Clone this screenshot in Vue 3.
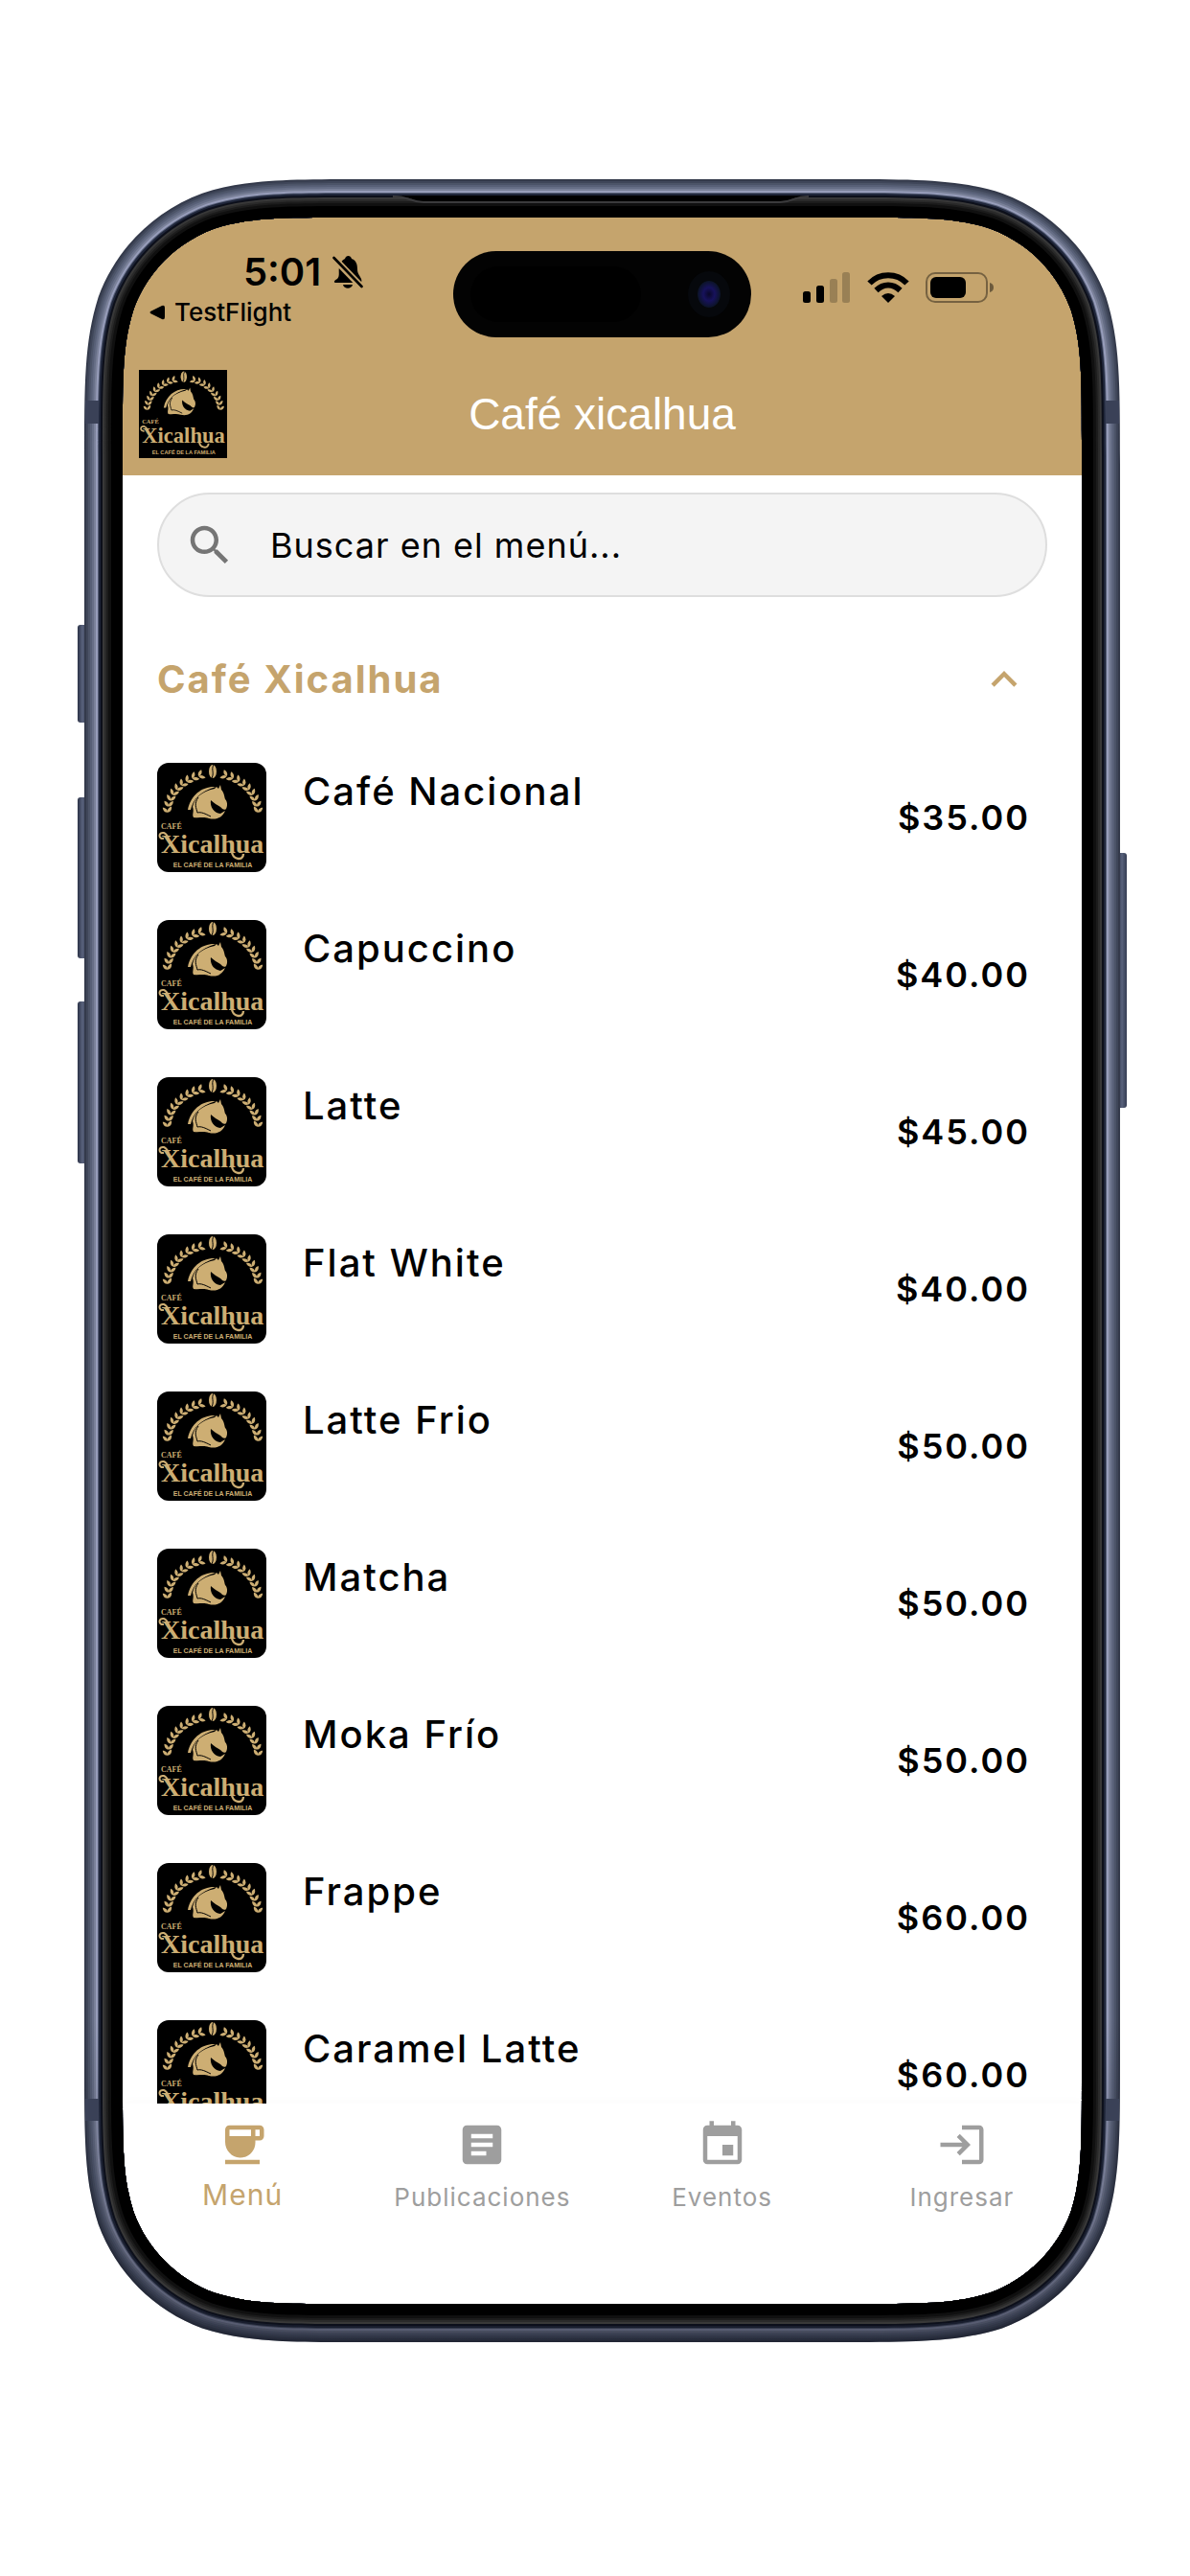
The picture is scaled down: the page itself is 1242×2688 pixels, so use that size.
<template>
  <div class="page">
    <svg class="symbols" aria-hidden="true">
      <symbol id="logo" viewBox="0 0 114 114">
        <rect width="114" height="114" fill="#000" />
        <g fill="#cdae73">
          <path
            v-for="(leaf, i) in leaves"
            :key="i"
            d="M0 0C1 -2.8 4 -3.6 7 -2.4C5.400 .6 2.600 1.300 0 0Z"
            :transform="leaf"
          />
          <ellipse cx="58" cy="9" rx="4" ry="7" />
          <path d="M59 2C56 7 60 10 57 16" fill="none" stroke="#000" stroke-width="1" />
          <path d="M61 25C48 24 35 33 32 49L35 49C38 37 45 30 61 25Z" />
          <path
            d="M66 23L67 28C70 31 70 35 71 38C73 40 74 44 72 48C70 50 68 48 66 46C63 44 59 42 56 39C55 46 59 52 66 53L71 50C68 57 62 60 54 58C48 56 44 58 38 57C36 54 39 51 37 46C39 37 46 30 60 27L62 25L64 27Z"
          />
          <path d="M43 36C38 43 41 47 42 52C46 51 50 53 56 56" fill="none" stroke="#000" stroke-width="1" />
          <g font-family="'Liberation Serif', serif" font-weight="700">
            <text x="4" y="69" font-size="8">CAFÉ</text>
            <text x="4" y="94" font-size="28">Xicalhua</text>
          </g>
          <text
            x="58"
            y="109"
            font-family="'Liberation Sans', sans-serif"
            font-size="7"
            font-weight="700"
            text-anchor="middle"
          >EL CAFÉ DE LA FAMILIA</text>
          <path d="M7 79C1 80 1 72 7 73C10 74 11 77 12 79" fill="none" stroke="#cdae73" stroke-width="2" />
          <path d="M78 92C78 101 90 103 90 95" fill="none" stroke="#cdae73" stroke-width="2.4" />
        </g>
      </symbol>
    </svg>

    <div class="phone">
      <div class="screen">
        <header class="header">
          <div class="status">
            <div class="status-left">
              <div class="clock">
                <span>5:01</span>
                <svg viewBox="0 0 32 36" width="32" height="36" aria-hidden="true">
                  <path d="M5 25C8 22 6 17 7 13C8 7 11 5 13 4C14 0 19 0 20 4C25 6 26 10 26 15C26 20 29 22 30 25C31 28 30 29 28 29H4C1 29 1 27 5 25Z" />
                  <path d="M11 31H21C20 36 12 36 11 31Z" />
                  <path d="M1 3L31 34" stroke="#c5a46d" stroke-width="7" />
                  <path d="M1.500 3L30.500 33" stroke="#000" stroke-width="2.600" stroke-linecap="round" />
                </svg>
              </div>
              <a class="back" href="#">
                <svg viewBox="0 0 16 16" width="16" height="16" aria-hidden="true">
                  <path d="M1 7L13 1Q16 0 16 3V13Q16 16 13 15L1 9Q0 8 1 7Z" />
                </svg>
                TestFlight
              </a>
            </div>
            <div class="island"><span class="sensor"></span><span class="camera"></span></div>
            <div class="status-right">
              <svg viewBox="0 0 50 32" width="50" height="32" aria-hidden="true">
                <rect y="20" width="8" height="12" rx="2.500" />
                <rect x="14" y="14" width="8" height="18" rx="2.500" />
                <rect x="28" y="7" width="8" height="25" rx="2.500" opacity=".22" />
                <rect x="41" y="0" width="8" height="32" rx="2.500" opacity=".22" />
              </svg>
              <svg viewBox="0 0 44 32" width="44" height="32" aria-hidden="true">
                <g fill="none" stroke="#000" stroke-width="6">
                  <path d="M2.500 11.500C13 .4 31 .4 41.500 11.500" />
                  <path d="M9.500 19C17 11.600 27 11.600 34.500 19" />
                </g>
                <path d="M15 25Q22 19 29 25L22 32Z" />
              </svg>
              <svg viewBox="0 0 71 32" width="71" height="32" aria-hidden="true">
                <rect x="1" y="1" width="63" height="30" rx="9" fill="none" stroke="#000" stroke-width="2" opacity=".4" />
                <rect x="5" y="5" width="37" height="22" rx="6" />
                <path d="M67 11Q71 12 71 16T67 21Z" opacity=".45" />
              </svg>
            </div>
          </div>
          <div class="app-bar">
            <svg class="app-logo" role="img" aria-label="Café Xicalhua"><use href="#logo" /></svg>
            <h1>Café xicalhua</h1>
          </div>
        </header>

        <main class="content">
          <label class="search">
            <svg class="icon" viewBox="0 0 24 24" aria-hidden="true">
              <path d="M15.5 14h-.79l-.28-.27C15.41 12.59 16 11.11 16 9.5 16 5.91 13.09 3 9.5 3S3 5.91 3 9.5 5.91 16 9.5 16c1.61 0 3.09-.59 4.23-1.57l.27.28v.79l5 4.99L20.49 19l-4.99-5zm-6 0C7.01 14 5 11.99 5 9.5S7.01 5 9.5 5 14 7.01 14 9.5 11.99 14 9.5 14z" />
            </svg>
            <input v-model="query" type="text" placeholder="Buscar en el menú..." aria-label="Buscar en el menú" />
          </label>

          <button class="section" type="button" :aria-expanded="open" @click="open = !open">
            Café Xicalhua
            <svg class="icon" :class="{ closed: !open }" viewBox="0 0 24 24" aria-hidden="true">
              <path d="M12 8l-6 6 1.410 1.410L12 10.830l4.590 4.580L18 14z" />
            </svg>
          </button>

          <ul v-if="open" class="items">
            <li v-for="item in filtered" :key="item.name" class="item">
              <svg class="thumb" aria-hidden="true"><use href="#logo" /></svg>
              <span class="name">{{ item.name }}</span>
              <span class="price">${{ item.price.toFixed(2) }}</span>
            </li>
          </ul>
        </main>

        <nav class="tabs">
          <a
            v-for="tab in tabs"
            :key="tab.label"
            href="#"
            class="tab"
            :class="{ active: tab.label === current }"
            @click.prevent="current = tab.label"
          >
            <svg class="icon" viewBox="0 0 24 24" aria-hidden="true"><path :d="tab.icon" /></svg>
            <span>{{ tab.label }}</span>
          </a>
        </nav>
      </div>

      <!-- Device frame, drawn over the edges of the screen -->
      <svg class="frame" viewBox="0 0 1081 2257" preserveAspectRatio="none" aria-hidden="true">
        <defs>
          <linearGradient id="button" x1="0" x2="1">
            <stop offset="0" stop-color="#2b3247" />
            <stop offset=".5" stop-color="#59627c" />
            <stop offset="1" stop-color="#343c52" />
          </linearGradient>
          <linearGradient id="shade" x1="0" y1="0" x2="0" y2="1">
            <stop offset=".85" stop-color="#10131f" stop-opacity="0" />
            <stop offset="1" stop-color="#10131f" stop-opacity=".5" />
          </linearGradient>
        </defs>
        <rect v-for="b in buttons" :key="b.y" :x="b.x" :y="b.y" width="10" :height="b.h" rx="3" fill="url(#button)" />
        <path v-for="(ring, i) in rings" :key="i" :d="ring.d" :fill="ring.color" fill-rule="evenodd" />
        <path :d="shell" fill="url(#shade)" fill-rule="evenodd" />
        <g fill="#3a4157">
          <rect x="1" y="231" width="14" height="24" />
          <rect x="1066" y="231" width="14" height="24" />
          <rect x="1" y="2003" width="14" height="23" />
          <rect x="1066" y="2003" width="14" height="23" />
        </g>
        <path d="M322 17H756C740 17 740 23 726 23H354C340 23 340 17 322 17Z" fill="#000" />
        <path d="M322 18C340 18 340 24 354 24H726C740 24 740 18 756 18" fill="none" stroke="#3a3a3c" stroke-width="2" />
      </svg>
    </div>
  </div>
</template>

<script setup>
import { computed, ref } from 'vue'

const query = ref('')
const open = ref(true)
const current = ref('Menú')

const items = [
  { name: 'Café Nacional', price: 35 },
  { name: 'Capuccino', price: 40 },
  { name: 'Latte', price: 45 },
  { name: 'Flat White', price: 40 },
  { name: 'Latte Frio', price: 50 },
  { name: 'Matcha', price: 50 },
  { name: 'Moka Frío', price: 50 },
  { name: 'Frappe', price: 60 },
  { name: 'Caramel Latte', price: 60 }
]

const filtered = computed(() =>
  items.filter((item) => item.name.toLowerCase().includes(query.value.toLowerCase()))
)

const tabs = [
  {
    label: 'Menú',
    icon: 'M20 3H6c-1.1 0-2 .9-2 2v5.71c0 3.83 2.95 7.18 6.78 7.29 3.96.12 7.22-3.06 7.22-7v-1h2c1.11 0 2-.9 2-2V5c0-1.11-.89-2-2-2zM16 8H6V5h10v3zm4 0h-2V5h2v3zM4 19h16v2H4z'
  },
  {
    label: 'Publicaciones',
    icon: 'M19 3H5c-1.1 0-2 .9-2 2v14c0 1.1.9 2 2 2h14c1.1 0 2-.9 2-2V5c0-1.1-.9-2-2-2zm-5 14H7v-2h7v2zm3-4H7v-2h10v2zm0-4H7V7h10v2z'
  },
  {
    label: 'Eventos',
    icon: 'M17 12h-5v5h5v-5zM16 1v2H8V1H6v2H5c-1.11 0-1.99.9-1.99 2L3 19c0 1.1.89 2 2 2h14c1.1 0 2-.9 2-2V5c0-1.1-.9-2-2-2h-1V1h-2zm3 18H5V8h14v11z'
  },
  {
    label: 'Ingresar',
    icon: 'M11 7L9.6 8.4l2.6 2.6H2v2h10.2l-2.6 2.6L11 17l5-5-5-5zm9 12h-8v2h8c1.1 0 2-.9 2-2V5c0-1.1-.9-2-2-2h-8v2h8v14z'
  }
]

// Leaves of the wreath, in pairs along both halves of an arc
const leaves = []
for (let i = 0; i < 9; i++) {
  const t = (3 + i * 8.6) * (Math.PI / 180)
  for (const side of [-1, 1]) {
    const x = 58 + side * 47 * Math.cos(t)
    const y = 54 - 42 * Math.sin(t)
    const up = -90 + (t * 180) / Math.PI
    for (const tilt of [-30, 48]) {
      leaves.push(`translate(${x.toFixed(1)} ${y.toFixed(1)}) scale(${-side} 1) rotate(${(up + tilt).toFixed(1)})`)
    }
  }
}

// Rounded rectangle with continuous corners
function squircle(inset, r) {
  const l = inset
  const t = inset
  const w = 1081 - inset
  const h = 2257 - inset
  const a = 1.528 * r
  const b = 1.088 * r
  const c = 0.868 * r
  const d = 0.631 * r
  const e = 0.075 * r
  const f = 0.373 * r
  const g = 0.169 * r
  return (
    `M${l + a} ${t}H${w - a}C${w - b} ${t} ${w - c} ${t} ${w - d} ${t + e}C${w - f} ${t + g} ${w - g} ${t + f} ${w - e} ${t + d}C${w} ${t + c} ${w} ${t + b} ${w} ${t + a}` +
    `V${h - a}C${w} ${h - b} ${w} ${h - c} ${w - e} ${h - d}C${w - g} ${h - f} ${w - f} ${h - g} ${w - d} ${h - e}C${w - c} ${h} ${w - b} ${h} ${w - a} ${h}` +
    `H${l + a}C${l + b} ${h} ${l + c} ${h} ${l + d} ${h - e}C${l + f} ${h - g} ${l + g} ${h - f} ${l + e} ${h - d}C${l} ${h - c} ${l} ${h - b} ${l} ${h - a}` +
    `V${t + a}C${l} ${t + b} ${l} ${t + c} ${l + e} ${t + d}C${l + g} ${t + f} ${l + f} ${t + g} ${l + d} ${t + e}C${l + c} ${t} ${l + b} ${t} ${l + a} ${t}Z`
  )
}

const hole = squircle(40, 152)
const shell = squircle(0, 195) + squircle(17, 178)

const rings = [
  [0, '#343a4b'],
  [2, '#3f4659'],
  [4, '#4c5468'],
  [6, '#586077'],
  [8, '#666e86'],
  [10, '#7a8199'],
  [12, '#979dba'],
  [14, '#565e76'],
  [15, '#1f263a'],
  [17, '#0c0f1a'],
  [19, '#383838'],
  [21, '#2a2a2a'],
  [23, '#1c1c1c'],
  [25, '#101010'],
  [28, '#000000']
].map(([inset, color]) => ({ d: squircle(inset, 195 - inset) + hole, color }))

const buttons = [
  { x: -7, y: 465, h: 102 },
  { x: -7, y: 645, h: 168 },
  { x: -7, y: 858, h: 169 },
  { x: 1078, y: 703, h: 266 }
]
</script>

<style>
body {
  background-color: #fff;
}
</style>

<style scoped>
.page {
  box-sizing: border-box;
  display: flex;
  height: 100vh;
  padding: 187px 73px 244px 88px;
  font-family: Inter, 'Liberation Sans', sans-serif;
  color: #000;
}

.symbols {
  display: none;
}

.phone {
  position: relative;
  display: flex;
  flex: 1;
  box-sizing: border-box;
  padding: 40px;
}

.frame {
  position: absolute;
  inset: 0;
  width: 100%;
  height: 100%;
  overflow: visible;
  pointer-events: none;
}

.screen {
  display: flex;
  flex: 1;
  flex-direction: column;
  min-width: 0;
  overflow: hidden;
  border-radius: 140px;
  background-color: #fff;
}

.header {
  background-color: #c5a46d;
}

.status {
  display: grid;
  grid-template-columns: 1fr auto 1fr;
  align-items: start;
  height: 141px;
}

.status-left {
  display: flex;
  flex-direction: column;
  padding-top: 33px;
}

.clock {
  display: flex;
  align-items: center;
  justify-content: center;
  gap: 12px;
  padding-left: 32px;
  font-size: 40px;
  font-weight: 600;
  line-height: 48px;
}

.back {
  display: flex;
  align-items: center;
  gap: 10px;
  padding-left: 28px;
  font-size: 26px;
  font-weight: 500;
  line-height: 36px;
  color: #000;
  text-decoration: none;
}

.island {
  display: flex;
  align-items: center;
  justify-content: space-between;
  box-sizing: border-box;
  width: 311px;
  height: 90px;
  margin-top: 35px;
  padding: 0 32px 0 18px;
  border-radius: 45px;
  background-color: #030303;
}

.sensor {
  width: 178px;
  height: 58px;
  border-radius: 29px;
  background-color: #000;
}

.camera {
  width: 24px;
  height: 28px;
  border-radius: 50%;
  background: radial-gradient(ellipse at 50% 50%, #0a0828 0, #17125c 35%, #0a1420 75%);
  box-shadow: 0 0 0 10px #06080c;
}

.status-right {
  display: flex;
  align-items: center;
  justify-content: center;
  gap: 17px;
  padding: 57px 38px 0 0;
}

.app-bar {
  display: grid;
  grid-template-columns: 1fr auto 1fr;
  align-items: center;
  height: 128px;
  padding: 0 17px;
}

.app-logo {
  width: 92px;
  height: 92px;
}

.app-bar h1 {
  margin: 0;
  font-family: 'Liberation Sans', sans-serif;
  font-size: 46px;
  font-weight: 400;
  line-height: 56px;
  color: #fff;
}

.content {
  flex: 1;
  min-height: 0;
  padding: 18px 36px 0;
  overflow: hidden;
}

.icon {
  flex: none;
  width: 54px;
  height: 54px;
  fill: currentColor;
}

.search {
  display: flex;
  align-items: center;
  gap: 36px;
  box-sizing: border-box;
  height: 109px;
  padding: 0 26px;
  border: 2px solid #dedede;
  border-radius: 55px;
  background-color: #f4f4f4;
  color: #757575;
}

.search input {
  flex: 1;
  min-width: 0;
  padding: 0;
  border: 0;
  outline: 0;
  background: none;
  font-family: inherit;
  font-size: 36px;
  letter-spacing: 1px;
  line-height: 48px;
  color: #000;
}

.search input::placeholder {
  color: #000;
  opacity: 1;
}

.section {
  display: flex;
  align-items: center;
  justify-content: space-between;
  width: 100%;
  margin-top: 54px;
  padding: 0 18px 0 0;
  border: 0;
  background: none;
  font-family: inherit;
  font-size: 40px;
  font-weight: 700;
  letter-spacing: 2px;
  line-height: 64px;
  color: #c5a46d;
}

.closed {
  transform: rotate(180deg);
}

.items {
  display: flex;
  flex-direction: column;
  gap: 50px;
  margin: 0;
  padding: 55px 18px 0 0;
  list-style: none;
}

.item {
  display: flex;
  align-items: center;
  gap: 38px;
  height: 114px;
}

.thumb {
  flex: none;
  width: 114px;
  height: 114px;
  border-radius: 12px;
}

.name {
  flex: 1;
  align-self: flex-start;
  font-size: 40px;
  font-weight: 500;
  letter-spacing: 2px;
  line-height: 60px;
}

.price {
  font-size: 36px;
  font-weight: 600;
  letter-spacing: 2px;
  line-height: 48px;
}

.tabs {
  position: relative;
  display: grid;
  grid-template-columns: repeat(4, 1fr);
  height: 209px;
  background-color: #fff;
  box-shadow: 0 -2px 12px rgba(0, 0, 0, 0.02);
}

.tab {
  display: flex;
  flex-direction: column;
  align-items: center;
  gap: 4px;
  padding-top: 16px;
  font-size: 26px;
  letter-spacing: 1px;
  line-height: 48px;
  color: #9e9e9e;
  text-decoration: none;
}

.tab.active {
  font-size: 30px;
  line-height: 42px;
  color: #c5a46d;
}
</style>
